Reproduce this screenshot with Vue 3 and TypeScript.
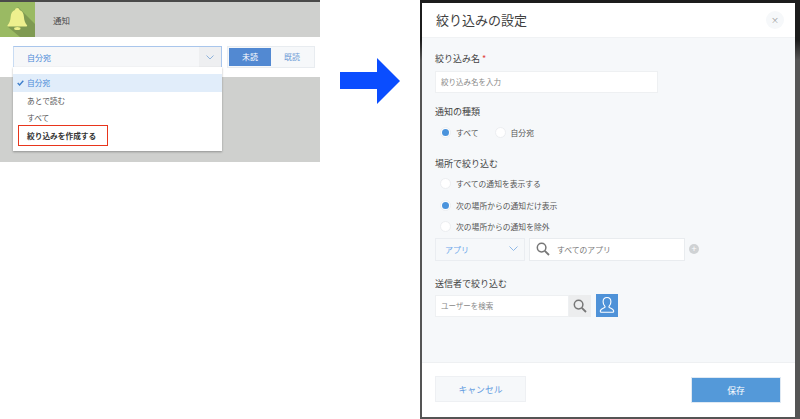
<script setup lang="ts">
const menuItems: { label: string; active?: boolean; strong?: boolean }[] = [
  { label: '自分宛', active: true },
  { label: 'あとで読む' },
  { label: 'すべて' },
  { label: '絞り込みを作成する', strong: true },
]
const placeOptions: { label: string; on?: boolean }[] = [
  { label: 'すべての通知を表示する' },
  { label: '次の場所からの通知だけ表示', on: true },
  { label: '次の場所からの通知を除外' },
]
</script>

<template>
  <div class="page">
    <section class="before">
      <header class="topbar">
        <div class="tile">
          <svg width="35" height="35" viewBox="0 0 35 35">
            <path d="M18 5 L35 22 V35 H20 L8 25 Z" fill="#7f9a52" />
            <path d="M17.300 6c-1.300 0-2.200 .9-2.300 2.100-2.800 1-4.100 3.500-4.300 6.600-.2 3.700-1.200 6-3.100 8.600-.4.600-.1 1.200.6 1.200h18.200c.7 0 1-.6.6-1.200-1.900-2.600-2.900-4.900-3.100-8.600-.2-3.100-1.500-5.600-4.300-6.600-.1-1.200-1-2.100-2.300-2.100z" fill="#eef08e" />
            <ellipse cx="17.300" cy="26.500" rx="3.200" ry="1.500" fill="#eef08e" />
          </svg>
        </div>
        <span class="bar-title">通知</span>
      </header>
      <div class="filter-row">
        <div class="select">
          <span class="select-value">自分宛</span>
          <span class="select-caret">
            <svg width="8" height="5" viewBox="0 0 8 5"><path d="M.5 .5 4 4 7.500 .5" fill="none" stroke="#8fb3dc" /></svg>
          </span>
        </div>
        <div class="tabs">
          <span class="tab on">未読</span>
          <span class="tab">既読</span>
        </div>
      </div>
      <div class="gray"></div>
      <ul class="menu">
        <li v-for="item in menuItems" :key="item.label" class="menu-item" :class="{ active: item.active, strong: item.strong }">
          <svg v-if="item.active" class="check" width="7" height="6" viewBox="0 0 7 6"><path d="M.7 3 2.600 5 6.300 .8" fill="none" stroke="#3f7fcc" stroke-width="1.400" /></svg>
          {{ item.label }}
        </li>
      </ul>
    </section>

    <div class="arrow">
      <svg width="60" height="46" viewBox="0 0 60 46"><path d="M0 14 H37 V0 L60 23 37 46 V31 H0 Z" fill="#0a4dff" /></svg>
    </div>

    <section class="frame">
      <div class="modal">
        <header class="modal-head">
          <h1>絞り込みの設定</h1>
          <span class="close">×</span>
        </header>
        <div class="modal-body">
          <div class="label first">絞り込み名 <i>*</i></div>
          <div class="field name-field">絞り込み名を入力</div>

          <div class="label kinds">通知の種類</div>
          <div class="radio-row">
            <span class="radio-item"><span class="radio on"></span>すべて</span>
            <span class="radio-item"><span class="radio"></span>自分宛</span>
          </div>

          <div class="label places">場所で絞り込む</div>
          <div class="radio-col">
            <span v-for="o in placeOptions" :key="o.label" class="radio-item">
              <span class="radio" :class="{ on: o.on }"></span>{{ o.label }}
            </span>
          </div>
          <div class="app-row">
            <div class="app-select">
              アプリ
              <svg width="9" height="6" viewBox="0 0 9 6"><path d="M.5 .5 4.500 4.500 8.500 .5" fill="none" stroke="#8fb8e6" /></svg>
            </div>
            <div class="app-search">
              <svg width="14" height="14" viewBox="0 0 14 14"><circle cx="5.600" cy="5.600" r="4.300" fill="none" stroke="#777" stroke-width="1.500" /><path d="M8.800 8.800 13 13" stroke="#777" stroke-width="1.800" /></svg>
              すべてのアプリ
            </div>
            <span class="plus">+</span>
          </div>

          <div class="label senders">送信者で絞り込む</div>
          <div class="user-row">
            <div class="user-input">ユーザーを検索</div>
            <div class="user-search">
              <svg width="14" height="14" viewBox="0 0 14 14"><circle cx="5.600" cy="5.600" r="4.300" fill="none" stroke="#777" stroke-width="1.500" /><path d="M8.800 8.800 13 13" stroke="#777" stroke-width="1.800" /></svg>
            </div>
            <div class="user-btn">
              <svg width="18" height="18" viewBox="0 0 18 18"><path d="M9 1.500c-2.400 0-3.900 1.800-3.900 4.300 0 1.800.7 3.300 1.700 4.300.4.500.3 1.200-.3 1.500-1.500.7-3.900 1.300-4.200 3.200-.1.900.3 1.400 1.100 1.400h11.200c.8 0 1.200-.5 1.100-1.400-.3-1.900-2.700-2.500-4.200-3.200-.6-.3-.7-1-.3-1.500 1-1 1.700-2.500 1.700-4.300C12.900 3.300 11.400 1.500 9 1.500z" fill="none" stroke="#fff" stroke-width="1.100" /></svg>
            </div>
          </div>
        </div>
        <footer class="modal-foot">
          <span class="btn cancel">キャンセル</span>
          <span class="btn save">保存</span>
        </footer>
      </div>
    </section>
  </div>
</template>

<style>
html, body { margin: 0; background: #fff; }
</style>

<style scoped>
.page {
  width: 800px;
  height: 419px;
  display: flex;
  overflow: hidden;
  font-family: "Noto Sans CJK JP", "Noto Sans", sans-serif;
  color: #444;
}
.before {
  position: relative;
  width: 320px;
  height: 162px;
  flex: none;
  display: flex;
  flex-direction: column;
  border-top: 2px solid #4a4a4a;
  box-sizing: border-box;
}
.topbar { height: 35px; display: flex; align-items: center; background: #cfd0ce; flex: none; }
.tile { width: 35px; height: 35px; background: #9aba63; flex: none; }
.tile svg { display: block; }
.bar-title { margin-left: 18px; font-size: 8.500px; color: #4a4a4a; }
.filter-row { height: 40px; flex: none; background: #fff; display: flex; align-items: flex-start; padding: 9px 0 0 13px; box-sizing: border-box; }
.select {
  width: 209px; height: 22px; box-sizing: border-box; display: flex; background: #f6f7f9;
  border: 1px solid #a9c6ec; border-bottom-color: #6d9ad8; border-left-color: #c9dcf3;
}
.select-value { flex: 1; padding-left: 13px; font-size: 8px; line-height: 21px; color: #4a8ad8; }
.select-caret { width: 22px; display: flex; align-items: center; justify-content: center; background: #eeeff1; }
.tabs { margin-left: 5px; width: 88px; height: 22px; box-sizing: border-box; border: 1px solid #e8ecf0; background: #f6f8fa; display: flex; padding: 1px; }
.tab { width: 42px; text-align: center; font-size: 8px; line-height: 18px; color: #6f9cd6; }
.tab.on { background: #5289d2; color: #fff; }
.gray { flex: 1; background: #cfd0ce; }
.menu {
  position: absolute; left: 13px; top: 65px; width: 209px; height: 84px; box-sizing: border-box;
  margin: 0; padding: 7px 0 0; list-style: none; background: #fff; box-shadow: 0 1px 2px rgba(0,0,0,.3);
}
.menu-item { position: relative; height: 17.500px; line-height: 17.500px; padding-left: 14px; font-size: 7.700px; color: #555; }
.menu-item.active { background: #e1edfa; color: #4a8ad8; }
.menu-item.strong { color: #333; font-weight: 700; }
.menu-item.strong::after {
  content: ""; position: absolute; left: 5px; top: -2px; width: 90px; height: 21px; box-sizing: border-box; border: 1px solid #e8351c;
}
.check { position: absolute; left: 4px; top: 6px; }
.arrow { width: 100px; flex: none; padding: 58px 0 0 20px; box-sizing: border-box; }
.arrow svg { display: block; }
.frame {
  width: 380px; height: 419px; box-sizing: border-box; padding: 3px 5px 2px 2px;
  background: linear-gradient(#1c1c1c 0, #1c1c1c 40px, #555 60px);
}
.modal { height: 414px; display: flex; flex-direction: column; background: #fff; }
.modal-head {
  height: 34px; flex: none; display: flex; align-items: center; justify-content: space-between;
  padding: 0 11px 0 14px; box-sizing: border-box;
}
h1 { margin: -2px 0 0; font-size: 13px; font-weight: 400; color: #3f3f3f; }
.close { width: 18px; height: 18px; border-radius: 50%; background: #f6f8fa; color: #999; font-size: 8px; line-height: 18px; text-align: center; }
.modal-body {
  flex: 1; background: #f6f8fa; padding: 0 13px; border-top: 1px solid #f0f2f4; border-bottom: 1px solid #eef0f2;
}
.label { font-size: 9px; line-height: 14px; color: #444; }
.label i { color: #e0433a; font-style: normal; }
.first { margin-top: 14px; }
.field {
  margin-top: 5px; width: 223px; height: 22px; box-sizing: border-box; background: #fff; border: 1px solid #eef0f2;
  padding-left: 5px; font-size: 7.500px; line-height: 20px; color: #888;
}
.kinds { margin-top: 12px; }
.radio-row { margin-top: 4px; padding-left: 5px; display: flex; gap: 16px; height: 18px; align-items: center; }
.radio-item { display: inline-flex; align-items: center; gap: 5px; font-size: 7.800px; color: #555; line-height: 11px; }
.radio {
  width: 11px; height: 11px; box-sizing: border-box; border-radius: 50%; background: #fff; border: 1px solid #eceef1; display: flex;
  align-items: center; justify-content: center;
}
.radio.on::before { content: ""; width: 7px; height: 7px; border-radius: 50%; background: #4a93dc; }
.places { margin-top: 16px; }
.radio-col { margin-top: 7px; padding-left: 5px; display: flex; flex-direction: column; gap: 10.500px; align-items: flex-start; }
.app-row { margin-top: 5.500px; display: flex; align-items: center; height: 23px; }
.app-select {
  width: 90px; height: 23px; box-sizing: border-box; background: #f6f8fa; border: 1px solid #eaedf1; display: flex; align-items: center;
  justify-content: space-between; padding: 0 6px 0 9px; font-size: 8px; color: #6fa8ea;
}
.app-search {
  margin-left: 4px; width: 156px; height: 23px; box-sizing: border-box; background: #fff; border: 1px solid #e9ecef; display: flex; align-items: center;
  gap: 7px; padding-left: 6px; font-size: 7.800px; color: #777;
}
.plus {
  margin-left: 4px; width: 10px; height: 10px; border-radius: 50%; background: #cfd2d4; color: #fff; font-size: 9px; line-height: 10px; text-align: center;
}
.senders { margin-top: 16px; }
.user-row { margin-top: 4px; display: flex; height: 22px; }
.user-input {
  width: 134px; box-sizing: border-box; background: #fff; border: 1px solid #eef0f2; padding-left: 5px; font-size: 7.500px; line-height: 20px; color: #888;
}
.user-search { width: 22px; background: #ecedee; display: flex; align-items: center; justify-content: center; }
.user-btn { margin: -1px 0 0 5px; width: 22px; height: 23px; background: #4f92d8; display: flex; align-items: center; justify-content: center; }
.modal-foot {
  height: 54px; flex: none; display: flex; justify-content: space-between; align-items: flex-start; padding: 13px 14px 0 13px; box-sizing: border-box;
}
.btn { height: 26px; line-height: 25px; text-align: center; font-size: 8.800px; box-sizing: border-box; }
.cancel { width: 91px; background: #f6f8fa; border: 1px solid #eef0f3; color: #5f9ae0; }
.save { width: 90px; background: #5499d9; border: 1px solid #dfe9f3; color: #fff; margin-top: 1px; }
</style>
